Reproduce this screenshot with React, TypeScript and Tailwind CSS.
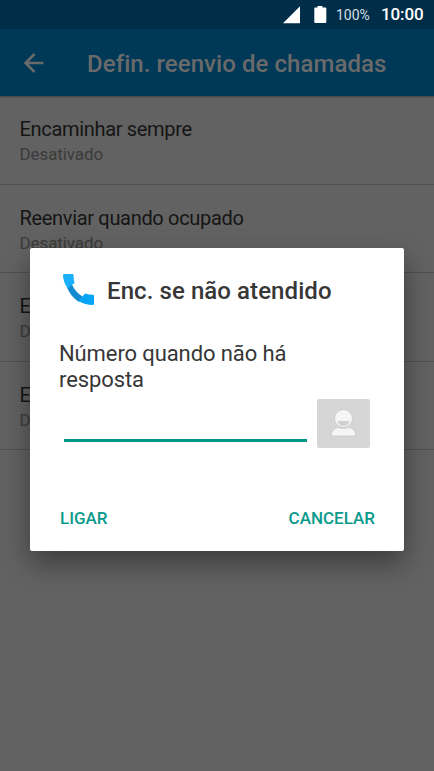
const items = [
  'Encaminhar sempre',
  'Reenviar quando ocupado',
  'Enc. se não atendido',
  'Enc. se não acessível',
];

function StatusBar() {
  return (
    <div className="flex h-[29px] items-center bg-[#002e49] text-white">
      <svg className="ml-[283px] h-[18px] w-[17px]" viewBox="0 0 17 18" fill="currentColor">
        <path d="M0 17.2 17 0.2V17.2Z" />
      </svg>
      <svg className="ml-[14px] h-[19px] w-[13px]" viewBox="0 0 13 19" fill="currentColor">
        <path d="M3.5 1h5v1.5h2.8q1 0 1 1V17q0 1-1 1H1.3q-1 0-1-1V3.500q0-1 1-1h2.200Z" />
      </svg>
      <span className="ml-[9px] w-[45px] whitespace-nowrap pt-px text-[14px] text-[#d6dfe4]">100%</span>
      <span className="whitespace-nowrap pt-px text-[17px] font-medium tracking-[-0.1px]">10:00</span>
    </div>
  );
}

function Header() {
  return (
    <header className="flex h-[67px] items-center bg-[#003857] text-[#6a6a6a]">
      <svg className="ml-[24px] h-5 w-5" viewBox="0 0 20 20" fill="none" stroke="currentColor" strokeWidth="2.5">
        <path d="M19.500 10H2M10.500 1 1.500 10l9 9" />
      </svg>
      <h1 className="ml-[43px] pt-[2px] whitespace-nowrap text-[24px] font-medium tracking-[0.06px]">
        Defin. reenvio de chamadas
      </h1>
    </header>
  );
}

function Dialog() {
  return (
    <div className="absolute left-[30px] top-[248px] flex h-[303px] w-[374px] flex-col rounded-[2px] bg-white text-[#373737] shadow-[0_12px_28px_rgba(0,0,0,0.4)]">
      <div className="flex h-[84px] items-center pl-[33px]">
        <svg className="h-8 w-8" viewBox="0 0 32 32">
          <path d="M4 13.500 8.500 9.500Q12 18 20 23L16 28Q8 23 4 13.500Z" fill="#148bd0" />
          <path d="M1 0H9.500Q10.500 0 10.500 1 10.500 5 11.500 9L4.500 14.200Q0 7.500 0 1 0 0 1 0Z" fill="#1aaffa" />
          <path d="M15.500 27 22 19.500Q26 20.800 30 20.800 31 20.800 31 21.800V30Q31 31 30 31 22 31 15.500 27Z" fill="#08a5f6" />
        </svg>
        <h2 className="ml-[12px] whitespace-nowrap pt-[2px] text-[24px] font-medium leading-[32px] tracking-[0.08px]">
          Enc. se não atendido
        </h2>
      </div>
      <p className="mt-[9px] pl-[29px] text-[22px] leading-[25.500px] tracking-[-0.1px]">
        Número quando não há
        <br />
        resposta
      </p>
      <div className="mt-[7px] flex pl-[34px]">
        <input aria-label="Número" className="h-[43px] w-[243px] border-b-[3px] border-[#009688] outline-none" />
        <button aria-label="Contatos" className="ml-[10px] flex h-[49px] w-[53px] justify-center rounded-[2px] bg-[#d6d6d6] pt-[10px]">
          <svg className="h-[28px] w-[27px]" viewBox="0 0 27 28" fill="#f5f5f5" stroke="#c4c4c4" strokeWidth="0.7">
            <path d="M1 27Q1.500 19.500 8 18.500L13.500 19.500 19 18.500Q25.500 19.500 26 27Z" />
            <circle cx="13.500" cy="9.500" r="9" />
            <path d="M7.500 12h12q-1 5-6 5t-6-5Z" fill="#d0d0d0" stroke="none" />
          </svg>
        </button>
      </div>
      <div className="mt-[58px] flex justify-between pl-[30px] pr-[29px] text-[17px] font-medium leading-[24px] text-[#0a9a8c]">
        <button>LIGAR</button>
        <button>CANCELAR</button>
      </div>
    </div>
  );
}

export default function App() {
  return (
    <div className="relative h-[771px] w-[434px] overflow-hidden bg-[#626262] font-['Roboto',sans-serif]">
      <StatusBar />
      <Header />
      <main className="shadow-[inset_0_3px_2px_-2px_rgba(0,0,0,0.3)]">
        {items.map((title) => (
          <div key={title} className="h-[88.500px] border-b border-[#505050] pl-[19.500px] pt-[20px]">
            <div className="whitespace-nowrap text-[20px] leading-[27px] tracking-[-0.32px] text-[#151515]">{title}</div>
            <div className="text-[17px] leading-[23px] tracking-[-0.1px] text-[#3b3b3b]">Desativado</div>
          </div>
        ))}
      </main>
      <Dialog />
    </div>
  );
}
